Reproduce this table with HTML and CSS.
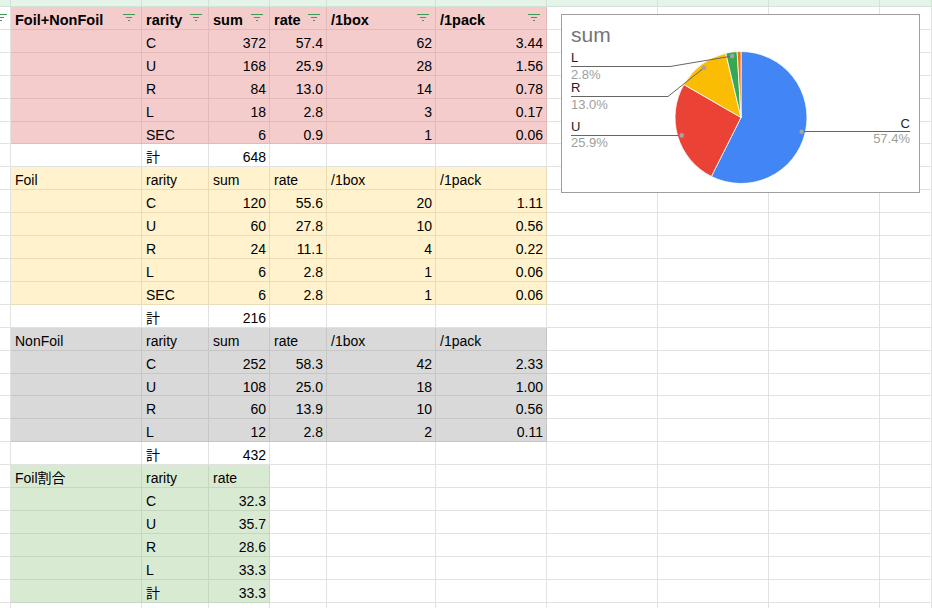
FILE: index.html
```html
<!DOCTYPE html>
<html lang="ja">
<head>
<meta charset="utf-8">
<title>sheet</title>
<link rel="stylesheet" href="styles.css">
</head>
<body>
<div class="sheet">
  <div class="row strip"><span></span><span></span><span></span><span></span><span></span><span></span><span></span><span></span><span></span><span></span><span></span></div>

  <div class="row hdr">
    <span class="pre"><svg class="flt" viewBox="0 0 12 7"><path d="M0 0.5h12M3 3.5h6M5 6.5h2"/></svg></span>
    <span class="p">Foil+NonFoil<svg class="flt" viewBox="0 0 12 7"><path d="M0 0.5h12M3 3.5h6M5 6.5h2"/></svg></span>
    <span class="p">rarity<svg class="flt" viewBox="0 0 12 7"><path d="M0 0.5h12M3 3.5h6M5 6.5h2"/></svg></span>
    <span class="p">sum<svg class="flt" viewBox="0 0 12 7"><path d="M0 0.5h12M3 3.5h6M5 6.5h2"/></svg></span>
    <span class="p">rate<svg class="flt" viewBox="0 0 12 7"><path d="M0 0.5h12M3 3.5h6M5 6.5h2"/></svg></span>
    <span class="p">/1box<svg class="flt" viewBox="0 0 12 7"><path d="M0 0.5h12M3 3.5h6M5 6.5h2"/></svg></span>
    <span class="p">/1pack<svg class="flt" viewBox="0 0 12 7"><path d="M0 0.5h12M3 3.5h6M5 6.5h2"/></svg></span>
    <span></span><span></span><span></span><span></span>
  </div>
  <div class="row"><span></span><span class="p"></span><span class="p">C</span><span class="p n">372</span><span class="p n">57.4</span><span class="p n">62</span><span class="p n">3.44</span><span></span><span></span><span></span><span></span></div>
  <div class="row"><span></span><span class="p"></span><span class="p">U</span><span class="p n">168</span><span class="p n">25.9</span><span class="p n">28</span><span class="p n">1.56</span><span></span><span></span><span></span><span></span></div>
  <div class="row"><span></span><span class="p"></span><span class="p">R</span><span class="p n">84</span><span class="p n">13.0</span><span class="p n">14</span><span class="p n">0.78</span><span></span><span></span><span></span><span></span></div>
  <div class="row"><span></span><span class="p"></span><span class="p">L</span><span class="p n">18</span><span class="p n">2.8</span><span class="p n">3</span><span class="p n">0.17</span><span></span><span></span><span></span><span></span></div>
  <div class="row"><span></span><span class="p"></span><span class="p">SEC</span><span class="p n">6</span><span class="p n">0.9</span><span class="p n">1</span><span class="p n">0.06</span><span></span><span></span><span></span><span></span></div>
  <div class="row"><span></span><span></span><span>計</span><span class="n">648</span><span></span><span></span><span></span><span></span><span></span><span></span><span></span></div>

  <div class="row"><span></span><span class="y">Foil</span><span class="y">rarity</span><span class="y">sum</span><span class="y">rate</span><span class="y">/1box</span><span class="y">/1pack</span><span></span><span></span><span></span><span></span></div>
  <div class="row"><span></span><span class="y"></span><span class="y">C</span><span class="y n">120</span><span class="y n">55.6</span><span class="y n">20</span><span class="y n">1.11</span><span></span><span></span><span></span><span></span></div>
  <div class="row"><span></span><span class="y"></span><span class="y">U</span><span class="y n">60</span><span class="y n">27.8</span><span class="y n">10</span><span class="y n">0.56</span><span></span><span></span><span></span><span></span></div>
  <div class="row"><span></span><span class="y"></span><span class="y">R</span><span class="y n">24</span><span class="y n">11.1</span><span class="y n">4</span><span class="y n">0.22</span><span></span><span></span><span></span><span></span></div>
  <div class="row"><span></span><span class="y"></span><span class="y">L</span><span class="y n">6</span><span class="y n">2.8</span><span class="y n">1</span><span class="y n">0.06</span><span></span><span></span><span></span><span></span></div>
  <div class="row"><span></span><span class="y"></span><span class="y">SEC</span><span class="y n">6</span><span class="y n">2.8</span><span class="y n">1</span><span class="y n">0.06</span><span></span><span></span><span></span><span></span></div>
  <div class="row"><span></span><span></span><span>計</span><span class="n">216</span><span></span><span></span><span></span><span></span><span></span><span></span><span></span></div>

  <div class="row"><span></span><span class="g">NonFoil</span><span class="g">rarity</span><span class="g">sum</span><span class="g">rate</span><span class="g">/1box</span><span class="g">/1pack</span><span></span><span></span><span></span><span></span></div>
  <div class="row"><span></span><span class="g"></span><span class="g">C</span><span class="g n">252</span><span class="g n">58.3</span><span class="g n">42</span><span class="g n">2.33</span><span></span><span></span><span></span><span></span></div>
  <div class="row"><span></span><span class="g"></span><span class="g">U</span><span class="g n">108</span><span class="g n">25.0</span><span class="g n">18</span><span class="g n">1.00</span><span></span><span></span><span></span><span></span></div>
  <div class="row"><span></span><span class="g"></span><span class="g">R</span><span class="g n">60</span><span class="g n">13.9</span><span class="g n">10</span><span class="g n">0.56</span><span></span><span></span><span></span><span></span></div>
  <div class="row"><span></span><span class="g"></span><span class="g">L</span><span class="g n">12</span><span class="g n">2.8</span><span class="g n">2</span><span class="g n">0.11</span><span></span><span></span><span></span><span></span></div>
  <div class="row"><span></span><span></span><span>計</span><span class="n">432</span><span></span><span></span><span></span><span></span><span></span><span></span><span></span></div>

  <div class="row"><span></span><span class="gr">Foil割合</span><span class="gr">rarity</span><span class="gr">rate</span><span></span><span></span><span></span><span></span><span></span><span></span><span></span></div>
  <div class="row"><span></span><span class="gr"></span><span class="gr">C</span><span class="gr n">32.3</span><span></span><span></span><span></span><span></span><span></span><span></span><span></span></div>
  <div class="row"><span></span><span class="gr"></span><span class="gr">U</span><span class="gr n">35.7</span><span></span><span></span><span></span><span></span><span></span><span></span><span></span></div>
  <div class="row"><span></span><span class="gr"></span><span class="gr">R</span><span class="gr n">28.6</span><span></span><span></span><span></span><span></span><span></span><span></span><span></span></div>
  <div class="row"><span></span><span class="gr"></span><span class="gr">L</span><span class="gr n">33.3</span><span></span><span></span><span></span><span></span><span></span><span></span><span></span></div>
  <div class="row"><span></span><span class="gr"></span><span class="gr">計</span><span class="gr n">33.3</span><span></span><span></span><span></span><span></span><span></span><span></span><span></span></div>
  <div class="row"><span></span><span></span><span></span><span></span><span></span><span></span><span></span><span></span><span></span><span></span><span></span></div>
</div>

<div class="chart">
  <svg width="359" height="179" viewBox="0 0 359 179">
    <rect x="0.5" y="0.5" width="358" height="178" fill="#fff" stroke="#9e9e9e"/>
    <text class="title" x="10" y="28">sum</text>
    <g class="pie">
      <path fill="#4285f4" d="M180 103.5L180 37.5A66 66 0 1 1 150.38 162.48Z"/>
      <path fill="#ea4335" d="M180 103.5L150.38 162.48A66 66 0 0 1 122.84 70.5Z"/>
      <path fill="#fbbc04" d="M180 103.5L122.84 70.5A66 66 0 0 1 164.78 39.28Z"/>
      <path fill="#34a853" d="M180 103.5L164.78 39.28A66 66 0 0 1 176.16 37.61Z"/>
      <path fill="#ff6d01" d="M180 103.5L176.16 37.61A66 66 0 0 1 180 37.5Z"/>
    </g>
    <g class="leader">
      <polyline points="10,52.5 109,52.5 171.1,42.1"/>
      <polyline points="10,82.5 107,82.5 143,53.8"/>
      <polyline points="10,121.5 120.7,121.5"/>
      <polyline points="240.7,117.5 349,117.5"/>
    </g>
    <g class="dot">
      <circle cx="171.1" cy="42.1" r="2.3"/>
      <circle cx="143" cy="53.8" r="2.3"/>
      <circle cx="120.7" cy="121.4" r="2.3"/>
      <circle cx="240.7" cy="117.7" r="2.3"/>
    </g>
    <text class="lbl" x="10" y="48.3">L</text>
    <text class="pct" x="10" y="64.5">2.8%</text>
    <text class="lbl" x="10" y="78">R</text>
    <text class="pct" x="10" y="95">13.0%</text>
    <text class="lbl" x="10" y="116.7">U</text>
    <text class="pct" x="10" y="133.3">25.9%</text>
    <text class="lbl end" x="349" y="114.3">C</text>
    <text class="pct end" x="349" y="129.3">57.4%</text>
  </svg>
</div>
</body>
</html>
```
FILE: styles.css
```css
* {
  box-sizing: border-box;
  margin: 0;
  padding: 0;
}

html,
body {
  width: 932px;
  height: 608px;
  overflow: hidden;
  background: #fff;
}

body {
  position: relative;
  font-family: "Liberation Sans", Arial, "Noto Sans CJK JP", sans-serif;
  font-size: 14px;
  color: #000;
}

.sheet {
  display: flex;
  flex-direction: column;
}

.row {
  display: grid;
  grid-template-columns: 11px 131px 67px 61px 57px 109px 111px 111px 111px 111px 1fr;
  height: 22.92px;
  flex: none;
}

.row > * {
  display: block;
  border-right: 1px solid #e2e2e2;
  border-bottom: 1px solid #e2e2e2;
  padding: 3px 3px 0 4px;
  line-height: 20px;
  white-space: nowrap;
  overflow: hidden;
}

.row.strip {
  height: 7px;
}

.row.strip > * {
  background: #e5f4e9;
  border-color: #cfe4d5;
  padding: 0;
}

.n {
  text-align: right;
}

.row > .p {
  background: #f4cccc;
  border-color: #e3b9b9;
}

.row > .y {
  background: #fff2cc;
  border-color: #eadcb5;
}

.row > .g {
  background: #d9d9d9;
  border-color: #c6c6c6;
}

.row > .gr {
  background: #d9ead3;
  border-color: #c5d8bf;
}

.hdr > * {
  display: flex;
  justify-content: space-between;
  align-items: flex-start;
  font-weight: bold;
  font-size: 14.5px;
  padding-right: 6px;
}

.hdr > .pre {
  padding: 0;
  justify-content: flex-start;
}

.flt {
  flex: none;
  width: 12px;
  height: 7px;
  margin-top: 4px;
  fill: none;
  stroke: #3f9a55;
  stroke-width: 1;
}

.pre .flt {
  margin-left: -5px;
  margin-top: 7px;
}

.chart {
  position: absolute;
  left: 561px;
  top: 14px;
  width: 359px;
  height: 179px;
}

.chart svg {
  display: block;
  font-family: "Liberation Sans", Arial, sans-serif;
}

.title {
  font-size: 21px;
  fill: #757575;
}

.pie path {
  stroke: #fff;
  stroke-width: 0.8;
}

.leader polyline {
  fill: none;
  stroke: #666;
  stroke-width: 1;
}

.dot circle {
  fill: #a3a3a3;
}

.lbl {
  font-size: 13px;
  fill: #222;
}

.pct {
  font-size: 13px;
  fill: #9e9e9e;
}

.end {
  text-anchor: end;
}
```
